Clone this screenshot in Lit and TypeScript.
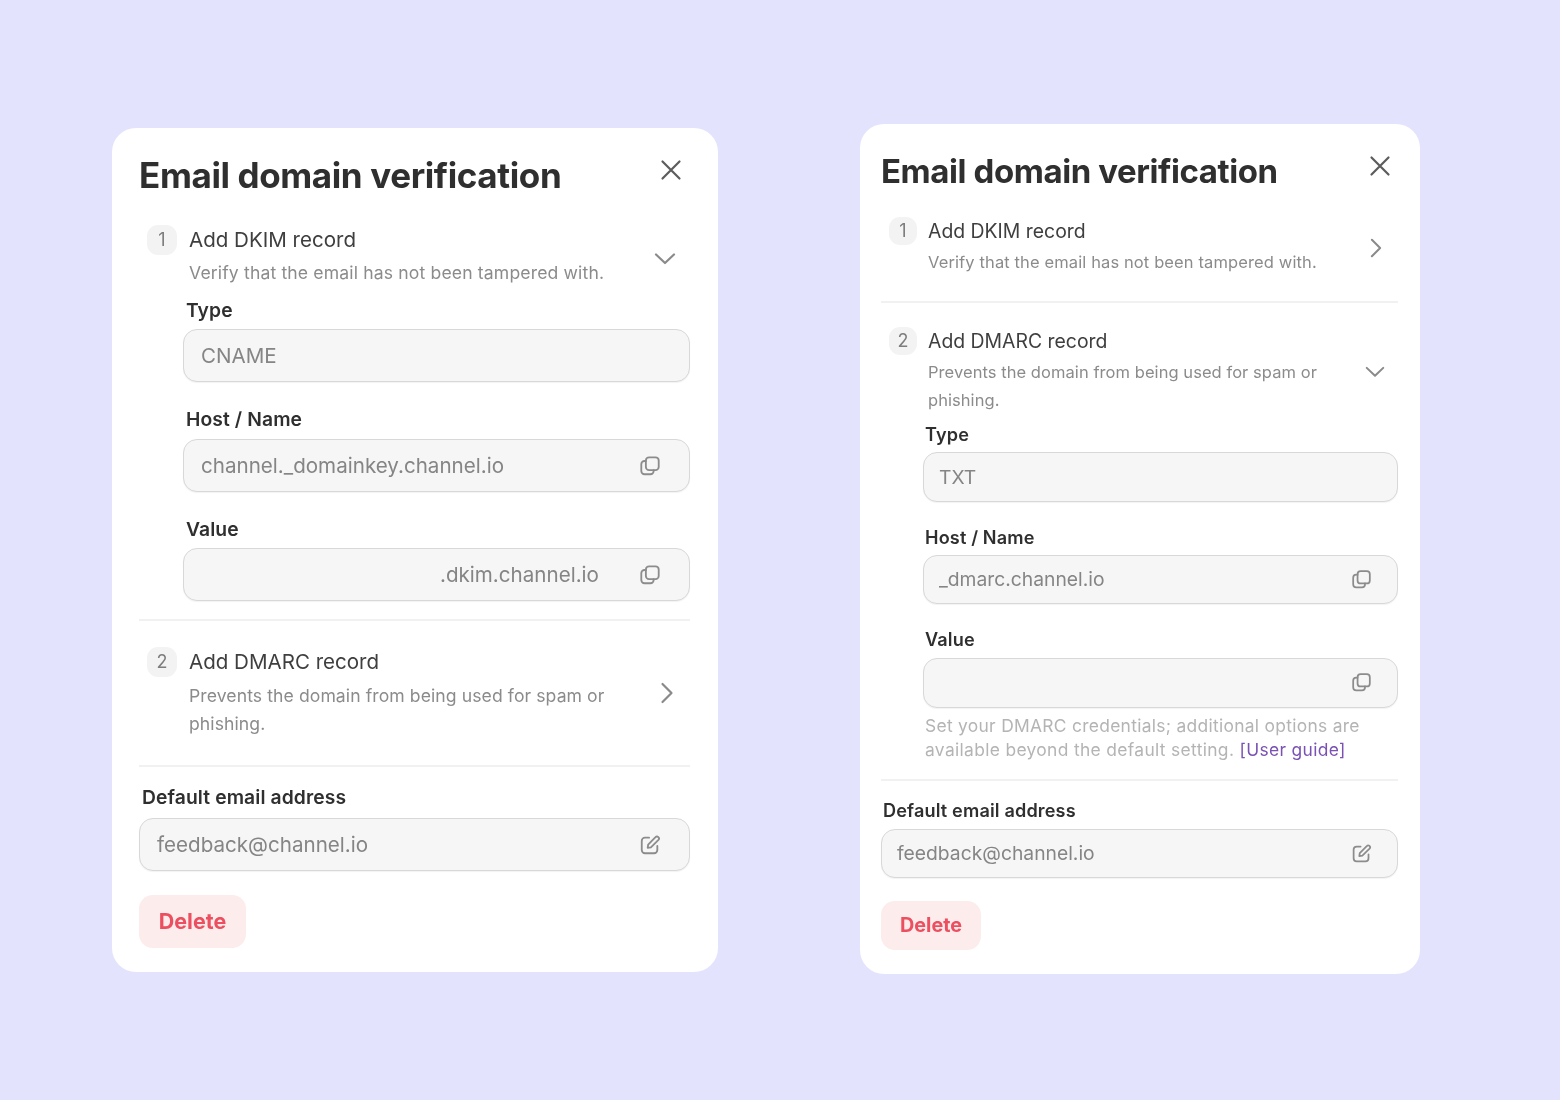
import { LitElement, html, css } from "lit";
import { customElement } from "lit/decorators.js";

const closeIcon = html`<svg class="ic close" viewBox="0 0 24 24"><path d="M3.500 3.500 20.500 20.500M20.500 3.500 3.500 20.500" /></svg>`;
const chevDown = html`<svg class="ic chev" viewBox="0 0 24 24"><path d="M3 7.500 12 16 21 7.500" /></svg>`;
const chevRight = html`<svg class="ic chev" viewBox="0 0 24 24"><path d="M7.500 3 16.500 12 7.500 21" /></svg>`;
const copyIcon = html`<svg class="ic tool" viewBox="0 0 24 24"><rect x="7.500" y="2.500" width="14" height="14" rx="3.500" /><path d="M7.500 6.500H6A3.500 3.500 0 0 0 2.500 10V17.500A3.500 3.500 0 0 0 6 21H12.500A3.500 3.500 0 0 0 16 17.500V16.500" /></svg>`;
const editIcon = html`<svg class="ic tool" viewBox="0 0 24 24"><path d="M11 4H6.500A3.500 3.500 0 0 0 3 7.500V17.500A3.500 3.500 0 0 0 6.500 21H16.500A3.500 3.500 0 0 0 20 17.500V13" /><path d="M9.500 15 10 11.500 18 3.500A2 2 0 0 1 21.200 6.500L13 14.500Z" /></svg>`;

@customElement("app-root")
export class AppRoot extends LitElement {
  static styles = css`
    :host {
      display: flex;
      align-items: flex-start;
      gap: 142px;
      height: 1100px;
      padding-left: 112px;
      box-sizing: border-box;
      background: #e3e3fd;
      font-family: Inter, "Liberation Sans", sans-serif;
      color: #2f2f2f;
    }
    .card {
      background: #fff;
      border-radius: 24px;
      box-sizing: border-box;
      flex: none;
      filter: blur(0.4px);
    }
    .left {
      width: 606px;
      height: 844px;
      margin-top: 128px;
      padding: 25px 28px 0 27px;
      --title: 35px;
      --title-ls: -0.38px;
      --title-h: 44px;
      --badge: 30px;
      --step: 20.55px;
      --step-h: 30px;
      --desc: 17.6px;
      --desc-ls: 0.14px;
      --desc-lh: 28px;
      --label: 19.3px;
      --input: 20.6px;
      --input-h: 53px;
      --text-gap: 12px;
      --tool: 22px;
      --chev: 24px;
    }
    .right {
      width: 560px;
      height: 850px;
      margin-top: 124px;
      padding: 25px 22px 0 21px;
      --title: 33px;
      --title-ls: -0.42px;
      --title-h: 44px;
      --badge: 28px;
      --step: 19.4px;
      --step-h: 28px;
      --desc: 16.5px;
      --desc-ls: 0.12px;
      --desc-lh: 28px;
      --label: 18.1px;
      --input: 19.3px;
      --input-h: 49.5px;
      --text-gap: 11px;
      --tool: 21px;
      --chev: 22px;
    }
    .head {
      display: flex;
      align-items: flex-start;
      justify-content: space-between;
      height: var(--title-h);
    }
    h1 {
      margin: 0;
      font-size: var(--title);
      line-height: var(--title-h);
      font-weight: 700;
      letter-spacing: var(--title-ls);
    }
    .ic {
      flex: none;
      fill: none;
      stroke-linecap: round;
      stroke-linejoin: round;
    }
    .close {
      width: 24px;
      height: 24px;
      stroke: #5c5c5c;
      stroke-width: 2.2;
      margin: 5px 7px 0 0;
    }
    .right .close {
      margin: 5px 6px 0 0;
    }
    .chev {
      width: var(--chev);
      height: var(--chev);
      stroke: #8a8a8a;
      stroke-width: 2.2;
    }
    .tool {
      width: var(--tool);
      height: var(--tool);
      stroke: #8c8c8c;
      stroke-width: 2;
      margin-left: auto;
    }
    .step {
      display: flex;
      align-items: center;
      padding-left: 8px;
    }
    .left .s1 {
      margin-top: 28px;
    }
    .right .s1 {
      margin-top: 24px;
    }
    .left .s2 {
      margin-top: 26px;
    }
    .right .s2 {
      margin-top: 24px;
    }
    .left .step {
      padding-right: 13px;
    }
    .right .step {
      padding-right: 12px;
    }
    .left .s1 .chev {
      margin-top: 6px;
    }
    .left .s2 .chev {
      margin-right: -2px;
    }
    .right .s1 .chev {
      margin: 3px -1px 0 0;
    }
    .right .s2 .chev {
      margin-top: 2px;
    }
    .stext {
      flex: 1;
      min-width: 0;
    }
    .stitle {
      display: flex;
      align-items: center;
      gap: var(--text-gap);
      font-size: var(--step);
      line-height: var(--step-h);
      color: #3f3f3f;
    }
    .badge {
      width: var(--badge);
      height: var(--badge);
      border-radius: 11px;
      background: #f3f3f3;
      color: #7d7d7d;
      display: flex;
      align-items: center;
      justify-content: center;
      font-size: 18px;
      flex: none;
    }
    .desc {
      font-size: var(--desc);
      line-height: var(--desc-lh);
      letter-spacing: var(--desc-ls);
      color: #8b8b8b;
      margin-top: 4px;
      padding-left: calc(var(--badge) + var(--text-gap));
    }
    .right .desc {
      margin-top: 3px;
    }
    .left .s2 .desc {
      margin-top: 5px;
      width: 430px;
      letter-spacing: 0.08px;
    }
    .right .s2 .desc {
      width: 410px;
      margin-top: 3px;
      letter-spacing: 0.06px;
    }
    .fields {
      margin-left: 44px;
    }
    .right .fields {
      margin-left: 42px;
      margin-top: 8px;
    }
    .left .fields {
      margin-top: 11px;
    }
    .field label {
      display: block;
      font-size: var(--label);
      line-height: 24px;
      font-weight: 600;
      letter-spacing: 0.1px;
      padding-left: 3px;
      margin-bottom: 7px;
    }
    .right .field label {
      padding-left: 2px;
      letter-spacing: 0.15px;
    }
    .fields .field + .field {
      margin-top: 25px;
    }
    .left .fields .field:nth-child(2) label {
      margin-bottom: 8px;
    }
    .right .fields .field + .field {
      margin-top: 23px;
    }
    .right .fields .field label {
      margin-bottom: 6px;
    }
    .right .fields .field:nth-child(3) label {
      margin-bottom: 7px;
    }
    .left .default label {
      margin-bottom: 9px;
    }
    .input {
      height: var(--input-h);
      box-sizing: border-box;
      display: flex;
      align-items: center;
      padding: 0 28px 0 17px;
      background: #f6f6f6;
      border: 1.5px solid #d8d8d8;
      border-radius: 14px;
      font-size: var(--input);
      color: #858585;
      box-shadow: 0 1px 1px rgba(0, 0, 0, 0.05);
    }
    .right .input {
      padding: 0 25px 0 15px;
    }
    .dkim {
      margin-left: 239px;
    }
    .helper {
      font-size: 17.4px;
      line-height: 24.500px;
      letter-spacing: 0.3px;
      color: #b4b4b4;
      padding-left: 2px;
      margin-top: 6px;
    }
    .helper .l2 {
      letter-spacing: 0.34px;
    }
    .helper a {
      color: #7a52b3;
    }
    hr {
      margin: 0;
      border: 0;
      height: 2px;
      background: #f1f1f1;
    }
    .left .h1 {
      margin-top: 18px;
    }
    .left .h2 {
      margin-top: 27px;
    }
    .right .h1 {
      margin-top: 25px;
    }
    .right .h2 {
      margin-top: 16px;
    }
    .default {
      margin-top: 18px;
    }
    .right .default {
      margin-top: 17px;
    }
    .del {
      display: flex;
      align-items: center;
      justify-content: center;
      margin-top: 24px;
      width: 107px;
      height: 53px;
      box-sizing: border-box;
      padding-bottom: 2px;
      border-radius: 14px;
      background: #fdecec;
      color: #ec4f5f;
      font-weight: 700;
      font-size: 21.5px;
    }
    .right .del {
      width: 100px;
      height: 49px;
      margin-top: 23px;
      font-size: 19.8px;
    }
  `;

  private step(cls: string, n: string, title: string, desc: string, chev: unknown) {
    return html`<div class="step ${cls}">
      <div class="stext">
        <div class="stitle"><span class="badge">${n}</span><span>${title}</span></div>
        <div class="desc">${desc}</div>
      </div>
      ${chev}
    </div>`;
  }

  private field(label: string, value: string, icon: unknown = null, cls = "") {
    return html`<div class="field">
      <label>${label}</label>
      <div class="input"><span class=${cls}>${value}</span>${icon}</div>
    </div>`;
  }

  private card(cls: string, body: unknown) {
    return html`<section class="card ${cls}">
      <div class="head"><h1>Email domain verification</h1>${closeIcon}</div>
      ${body}
      <div class="field default">
        <label>Default email address</label>
        <div class="input"><span>feedback@channel.io</span>${editIcon}</div>
      </div>
      <div class="del">Delete</div>
    </section>`;
  }

  render() {
    const dkim = "Verify that the email has not been tampered with.";
    const dmarc = "Prevents the domain from being used for spam or phishing.";
    return html`
      ${this.card(
        "left",
        html`${this.step("s1", "1", "Add DKIM record", dkim, chevDown)}
          <div class="fields">
            ${this.field("Type", "CNAME")}
            ${this.field("Host / Name", "channel._domainkey.channel.io", copyIcon)}
            ${this.field("Value", ".dkim.channel.io", copyIcon, "dkim")}
          </div>
          <hr class="h1" />
          ${this.step("s2", "2", "Add DMARC record", dmarc, chevRight)}
          <hr class="h2" />`
      )}
      ${this.card(
        "right",
        html`${this.step("s1", "1", "Add DKIM record", dkim, chevRight)}
          <hr class="h1" />
          ${this.step("s2", "2", "Add DMARC record", dmarc, chevDown)}
          <div class="fields">
            ${this.field("Type", "TXT")}
            ${this.field("Host / Name", "_dmarc.channel.io", copyIcon)}
            ${this.field("Value", "", copyIcon)}
            <div class="helper">
              <div>Set your DMARC credentials; additional options are</div>
              <div class="l2">available beyond the default setting. <a>[User guide]</a></div>
            </div>
          </div>
          <hr class="h2" />`
      )}
    `;
  }
}
